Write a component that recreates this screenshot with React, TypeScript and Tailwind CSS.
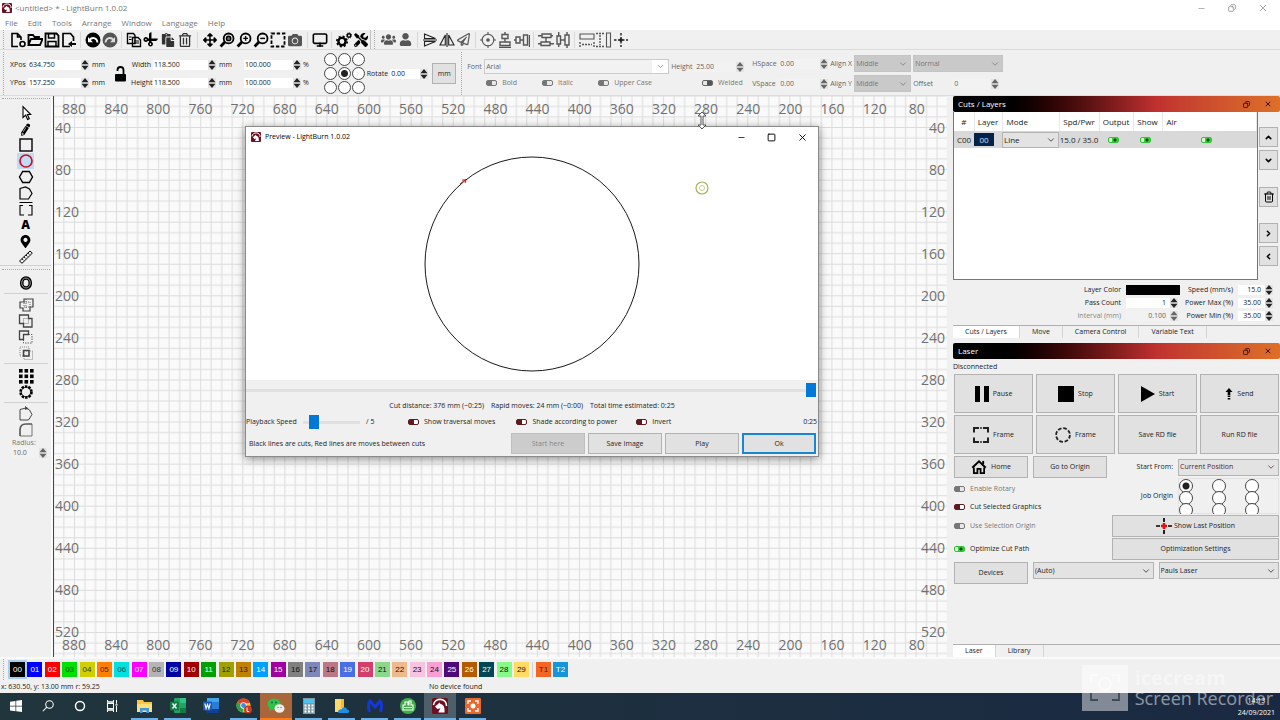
import { useState } from 'react';
import type { ReactNode } from 'react';
import clsx from 'clsx';
import { Save, FilePlus2, FileInput, Monitor, ChevronDown, X, Minus, Copy, Square, Trash2 } from 'lucide-react';
import {
    FaRegFolderOpen, FaRegCopy, FaCut, FaPaste, FaRegTrashAlt, FaArrowsAlt, FaCamera, FaCogs, FaTools,
    FaUsers, FaUser, FaRegPaperPlane, FaMapMarkerAlt, FaPencilAlt,
} from 'react-icons/fa';

const COLUMNS = Array.from({ length: 21 }, (_, i) => 880 - i * 40);
const ROWS = Array.from({ length: 13 }, (_, i) => 40 + i * 40);

const SWATCHES = [
    ['00', 'bg-black text-white'], ['01', 'bg-[#0000ff] text-white'], ['02', 'bg-[#ff0000] text-white'],
    ['03', 'bg-[#00e000] text-[#064a06]'], ['04', 'bg-[#d0d000] text-[#333300]'], ['05', 'bg-[#ff8000] text-[#4a2500]'],
    ['06', 'bg-[#00e0e0] text-[#064a4a]'], ['07', 'bg-[#ff00ff] text-white'], ['08', 'bg-[#b4b4b4] text-[#333]'],
    ['09', 'bg-[#0000a0] text-white'], ['10', 'bg-[#a00000] text-white'], ['11', 'bg-[#00a000] text-white'],
    ['12', 'bg-[#a0a000] text-[#222]'], ['13', 'bg-[#c08000] text-[#222]'], ['14', 'bg-[#00a0ff] text-white'],
    ['15', 'bg-[#a000a0] text-white'], ['16', 'bg-[#808080] text-[#111]'], ['17', 'bg-[#7d87b9] text-[#111]'],
    ['18', 'bg-[#bb7784] text-[#111]'], ['19', 'bg-[#4a6fe3] text-white'], ['20', 'bg-[#d33f6a] text-white'],
    ['21', 'bg-[#8cd78c] text-[#111]'], ['22', 'bg-[#f0b98d] text-[#111]'], ['23', 'bg-[#f6c4e1] text-[#111]'],
    ['24', 'bg-[#fa9ed4] text-[#111]'], ['25', 'bg-[#500a78] text-white'], ['26', 'bg-[#b45a00] text-white'],
    ['27', 'bg-[#004754] text-white'], ['28', 'bg-[#86fa88] text-[#111]'], ['29', 'bg-[#ffdb66] text-[#111]'],
];

type IconProps = { children: ReactNode; className?: string };

function Icon({ children, className = 'size-4' }: IconProps) {
    return (
        <svg viewBox="0 0 16 16" className={className} fill="none" stroke="currentColor" strokeWidth={1.4} aria-hidden="true">
            {children}
        </svg>
    );
}

function Tool({ label, children, className }: { label: string; children: ReactNode; className?: string }) {
    return (
        <button type="button" aria-label={label} className={clsx('flex h-4 w-[17px] shrink-0 items-center justify-center', className)}>
            {children}
        </button>
    );
}

function Sep() {
    return <div className="mx-[3px] h-4 w-px bg-[#d8d8d8]" />;
}

function Grip() {
    return <div className="h-full w-0 border-l border-dotted border-[#a8a8a8]" />;
}

function Spinner() {
    return (
        <svg viewBox="0 0 8 10" className="h-[10px] w-2 shrink-0" aria-hidden="true">
            <rect width="8" height="10" fill="#e4e4e4" />
            <path d="M4 0L7.500 4.200H.5zM4 10L7.500 5.800H.5z" fill="currentColor" />
        </svg>
    );
}

type NumProps = { label: string; value: string; className?: string; disabled?: boolean; right?: boolean };

function Num({ label, value, className, disabled, right }: NumProps) {
    return (
        <span className={clsx('flex items-center', disabled && 'text-[#666]', className)}>
            <input
                aria-label={label}
                defaultValue={value}
                disabled={disabled}
                className={clsx('h-[10px] w-0 min-w-0 flex-1 px-px outline-none', disabled ? 'bg-[#f2f2f2]' : 'bg-white', right && 'pr-1 text-right')}
            />
            <Spinner />
        </span>
    );
}

function Toggle({ label, on, disabled, hideLabel }: { label: string; on?: boolean; disabled?: boolean; hideLabel?: boolean }) {
    const [checked, setChecked] = useState(!!on);
    let look = 'border-[#5c1c20] bg-[linear-gradient(90deg,#5c1c20_55%,#fff_55%)]';
    if (disabled) look = 'border-[#777] bg-[linear-gradient(90deg,#777_50%,#e8e8e8_50%)]';
    if (disabled && on) look = 'border-[#666] bg-[linear-gradient(90deg,#e8e8e8_45%,#555_45%)]';
    if (!disabled && checked) look = 'border-[#2fc436] bg-[radial-gradient(circle_at_6px_2px,#0d4a10_1px,transparent_2px),linear-gradient(90deg,#d8f8d8_35%,#35cf3c_35%)]';
    return (
        <label className={clsx('flex items-center gap-[5px] whitespace-nowrap', disabled && 'text-[#777]')}>
            <input
                type="checkbox"
                aria-label={label}
                checked={checked}
                disabled={disabled}
                onChange={(e) => setChecked(e.target.checked)}
                className={clsx('h-[6px] w-[11px] shrink-0 appearance-none rounded-[2px] border', look)}
            />
            {!hideLabel && label}
        </label>
    );
}

function Combo({ label, value, className, disabled }: { label: string; value: string; className?: string; disabled?: boolean }) {
    return (
        <span className={clsx('relative flex border', disabled ? 'border-[#c4c4c4] bg-[#c9c9c9] text-[#777]' : 'border-[#b4b4b4] bg-[#e3e3e3]', className)}>
            <select aria-label={label} disabled={disabled} className="w-full appearance-none bg-transparent px-px outline-none">
                <option>{value}</option>
            </select>
            <ChevronDown size={10} strokeWidth={1.8} className="pointer-events-none absolute right-[2px] top-1/2 -translate-y-1/2" />
        </span>
    );
}

function PushButton({ children, className }: { children: ReactNode; className?: string }) {
    return (
        <button type="button" className={clsx('flex items-center justify-center border border-[#b2b2b2] bg-[#e1e1e1]', className)}>
            {children}
        </button>
    );
}

function OriginGrid({ name, picked, className, dot }: { name: string; picked: number; className: string; dot: string }) {
    const [value, setValue] = useState(picked);
    return (
        <div role="radiogroup" aria-label={name} className={clsx('grid grid-cols-3', className)}>
            {Array.from({ length: 9 }, (_, i) => (
                <input
                    key={i}
                    type="radio"
                    name={name}
                    aria-label={`${name} ${i + 1}`}
                    checked={value === i}
                    onChange={() => setValue(i)}
                    className={clsx('appearance-none rounded-full border border-[#444] bg-white checked:bg-[radial-gradient(circle,#222_3px,#fff_4px)]', dot)}
                />
            ))}
        </div>
    );
}

function Magnifier({ children, label }: { children?: ReactNode; label: string }) {
    return (
        <Tool label={label}>
            <Icon>
                <circle cx="9.6" cy="6.4" r="4.9" strokeWidth="1.8" />
                <path d="M6.2 9.8L1.6 14.4" strokeWidth="2.8" />
                {children}
            </Icon>
        </Tool>
    );
}

function AppLogo({ className }: { className: string }) {
    return (
        <svg viewBox="0 0 16 16" className={className} aria-hidden="true">
            <rect width="16" height="16" rx="1.5" fill="#6d1020" />
            <path d="M1.5 7C2 3 5.500 1.300 8.500 1.400c4 .2 6.300 3 6 6.600" fill="none" stroke="#fff" strokeWidth="1.600" />
            <path d="M3 8.500l3-2.500 1.500-1.600 1 1.500c3 .6 4.500 3.100 4 8.600H6.500c.2-2 1.300-2.800 2-4.200L5.500 11z" fill="#fff" />
        </svg>
    );
}

function TopToolbar() {
    return (
        <div className="flex h-5 items-center border-b border-[#dadada] pl-[3px] text-black">
            <Grip />
            <div className="w-[5px]" />
            <Tool label="New">
                <Icon><path d="M8 14.500H2v-13h5.500L11 5v3M7.500 1.500V5H11" strokeWidth="1.600" /><circle cx="12.500" cy="12" r="2.500" strokeWidth="1.600" /></Icon>
            </Tool>
            <Tool label="Open">
                <Icon><path d="M1.500 13V3h4.500l1.500 2H12v2M1.500 13L4 7h11.500L13 13z" strokeWidth="1.800" /></Icon>
            </Tool>
            <Tool label="Save">
                <Icon><path d="M1.500 1.500h11l2 2v11h-13z" strokeWidth="1.800" /><path d="M4.500 2v4h6V2M4 14.500V9.500h8v5" strokeWidth="1.500" /></Icon>
            </Tool>
            <Tool label="Import">
                <Icon><path d="M9 14.500H2v-13h7.500L12.500 5v4" strokeWidth="1.700" /><path d="M7 12l4-3v2h4v2h-4v2z" fill="currentColor" stroke="none" /></Icon>
            </Tool>
            <Sep />
            <Tool label="Undo">
                <Icon>
                    <circle cx="8" cy="8" r="7.500" fill="currentColor" stroke="none" />
                    <path d="M12.500 10.500C12 5.500 7 4.800 4.500 8" stroke="#fff" strokeWidth="1.800" />
                    <path d="M3 5v5.200h5z" fill="#fff" stroke="none" />
                </Icon>
            </Tool>
            <Tool label="Redo" className="text-[#555]">
                <Icon>
                    <circle cx="8" cy="8" r="7.500" fill="currentColor" stroke="none" />
                    <path d="M3.500 10.500C4 5.500 9 4.800 11.500 8" stroke="#ddd" strokeWidth="1.800" />
                    <path d="M13 5v5.200H8z" fill="#ddd" stroke="none" />
                </Icon>
            </Tool>
            <Sep />
            <Tool label="Copy">
                <Icon><path d="M1.500 1.500h6l1.500 2v8H1.500zM6.500 5.500h5.500l2.500 2.500v6.500h-8z" fill="#f0f0f0" strokeWidth="1.400" /><path d="M8 9h5M8 11h5M3 5h2.500M3 7.500h2.500" strokeWidth="1" /></Icon>
            </Tool>
            <Tool label="Cut"><FaCut size={13} className="-rotate-45" /></Tool>
            <Tool label="Paste" className="text-[#333]"><FaPaste size={14} /></Tool>
            <Tool label="Delete" className="text-[#333]"><FaRegTrashAlt size={14} /></Tool>
            <div className="w-px" />
            <Sep />
            <Tool label="Pan"><FaArrowsAlt size={14} /></Tool>
            <Magnifier label="Zoom to page"><circle cx="9.6" cy="6.4" r="2.200" fill="#666" /></Magnifier>
            <Magnifier label="Zoom in"><path d="M9.600 4v4.800M7.200 6.400H12" /></Magnifier>
            <Magnifier label="Zoom out"><path d="M7.200 6.400H12" /></Magnifier>
            <Tool label="Frame selection">
                <Icon><rect x="1.500" y="1.500" width="13" height="13" strokeWidth="1.800" strokeDasharray="3.400 1.800" /></Icon>
            </Tool>
            <Tool label="Camera" className="text-[#555]"><FaCamera size={14} /></Tool>
            <div className="w-px" />
            <Sep />
            <Tool label="Preview"><Monitor size={16} strokeWidth={2.400} /></Tool>
            <Sep />
            <Tool label="Settings">
                <Icon>
                    <circle cx="6" cy="9.500" r="3.600" strokeWidth="2.400" />
                    <circle cx="6" cy="9.500" r="5.200" strokeWidth="1.600" strokeDasharray="2 2.084" />
                    <circle cx="13" cy="3.500" r="1.700" strokeWidth="1.400" />
                    <circle cx="13" cy="3.500" r="2.700" strokeWidth="1" strokeDasharray="1 1.120" />
                </Icon>
            </Tool>
            <Tool label="Device settings"><FaTools size={14} /></Tool>
            <div className="ml-px mr-[3px] h-full w-px bg-[#c0c0c0]" />
            <Grip />
            <div className="flex items-center pl-[5px] text-[#555]">
                <Tool label="Group"><FaUsers size={15} /></Tool>
                <Tool label="Ungroup"><FaUser size={13} /></Tool>
                <Sep />
                <Tool label="Flip vertical" className="text-[#222]">
                    <Icon><path d="M2.500 2L13.500 6.500h-11zM2.500 14L13.500 9.500h-11zM1 8h14" strokeWidth="1.100" /></Icon>
                </Tool>
                <Tool label="Flip horizontal" className="text-[#222]">
                    <Icon><path d="M6.300 3v10H1zM9.700 3v10H15zM8 1v14" strokeWidth="1.100" /></Icon>
                </Tool>
                <Tool label="Mirror across line"><FaRegPaperPlane size={13} /></Tool>
                <Sep />
                <Tool label="Center">
                    <Icon>
                        <circle cx="8" cy="8" r="5.800" strokeWidth="1.100" />
                        <circle cx="8" cy="8" r="1.800" fill="currentColor" stroke="none" />
                        <path d="M8 0v3M8 13v3M0 8h3M13 8h3" strokeWidth="1.100" />
                    </Icon>
                </Tool>
                <Tool label="Align centers vertically">
                    <Icon><path d="M5 2.500h6v4H5zM3 10h10v3.500H3zM8 0v2.500M8 6.500V10M2 15.500h12" /></Icon>
                </Tool>
                <Tool label="Align centers horizontally">
                    <Icon><path d="M2 5h4v6H2zM9.500 3h4v10h-4zM0 8h2M6 8h3.500M15.500 3v12" /></Icon>
                </Tool>
                <Sep />
                <Tool label="Distribute vertically">
                    <Icon><path d="M4 2h9v3.500H4zM3 10h9v3.500H3zM0 3.700h4M13 3.700h2M0 11.700h3M12 11.700h4M8 5.500V10" /></Icon>
                </Tool>
                <Tool label="Distribute horizontally">
                    <Icon><path d="M2 4h3.500v8H2zM10 3h4v10h-4zM3.700 0v4M3.700 12v3M12 0v3M12 13v3M5.500 8H10" /></Icon>
                </Tool>
                <Sep />
                <Tool label="Match widths">
                    <Icon><path d="M1 2h14v5H1z" strokeWidth="1.100" /><path d="M1 10v5M15 10v5M3 12.500h10" strokeDasharray="2 1" /></Icon>
                </Tool>
                <Tool label="Match heights">
                    <Icon><path d="M10.500 1h4v14h-4z" strokeWidth="1.100" /><path d="M0 1.500h8M0 14.500h8M4 3v10" strokeDasharray="2 1" /></Icon>
                </Tool>
                <Tool label="Move to position" className="text-[#222]">
                    <Icon><path d="M8 1v14M1 8h14" strokeDasharray="2.500 1.500" /><circle cx="8" cy="8" r="1.800" fill="currentColor" stroke="none" /></Icon>
                </Tool>
            </div>
        </div>
    );
}

function PropertiesBar() {
    return (
        <div className="flex h-[46px] items-center border-b border-[#dcdcdc] pl-[3px] pt-[2px]">
            <Grip />
            <div className="ml-[6px] flex w-24 flex-col gap-2">
                {[['XPos', '634.750'], ['YPos', '157.250']].map(([name, value]) => (
                    <div key={name} className="flex items-center gap-[2px]">
                        <span className="w-4">{name}</span>
                        <Num label={name} value={value} className="w-[61px]" />
                        <span className="ml-px">mm</span>
                    </div>
                ))}
            </div>
            <button type="button" aria-label="Lock aspect ratio" className="ml-2 text-black">
                <svg viewBox="0 0 13 16" className="h-4 w-[13px]" aria-hidden="true">
                    <rect x="1" y="8" width="11" height="7.500" rx="1" fill="currentColor" />
                    <path d="M3.500 5V4a3 3 0 0 1 6 0v4.500" fill="none" stroke="currentColor" strokeWidth="1.800" />
                </svg>
            </button>
            <div className="ml-1 flex flex-col gap-2">
                {['Width', 'Height'].map((name) => (
                    <div key={name} className="flex items-center gap-[2px]">
                        <span className="w-5 whitespace-nowrap text-right">{name}</span>
                        <Num label={name} value="118.500" className="w-[63px]" />
                        <span className="w-6 pl-px">mm</span>
                        <Num label={`${name} percent`} value="100.000" className="w-[57px]" />
                        <span>%</span>
                    </div>
                ))}
            </div>
            <OriginGrid name="Anchor" picked={4} className="ml-[15px] gap-px" dot="size-[13px]" />
            <span className="ml-[2px]">Rotate</span>
            <Num label="Rotate" value="0.00" className="ml-[2px] w-[38px]" />
            <PushButton className="ml-1 h-[21px] w-6">mm</PushButton>
            <div className="ml-1 flex h-full items-center pl-px">
                <Grip />
            </div>
            <div className="ml-[5px] flex flex-col gap-1 text-[#666]">
                <div className="flex items-center">
                    <span className="w-[17px]">Font</span>
                    <span className="relative flex h-[15px] w-[185px] border border-[#ccc] bg-[#f2f2f2]">
                        <select aria-label="Font" disabled className="w-full appearance-none bg-transparent px-px">
                            <option>Arial</option>
                        </select>
                        <span className="pointer-events-none absolute inset-y-0 right-0 flex w-4 items-center justify-center bg-white">
                            <ChevronDown size={9} strokeWidth={1.800} />
                        </span>
                    </span>
                    <span className="ml-[2px] w-6">Height</span>
                    <Num label="Height" value="25.00" disabled className="w-[49px]" />
                </div>
                <div className="flex items-center gap-[25px] pl-[19px]">
                    <Toggle label="Bold" disabled />
                    <Toggle label="Italic" disabled />
                    <Toggle label="Upper Case" disabled />
                    <div className="w-0" />
                    <Toggle label="Welded" on disabled />
                </div>
            </div>
            <div className="ml-2 grid grid-cols-[76px_22px_57px_90px] items-center gap-x-[2px] gap-y-[3px] text-[#666]">
                <div className="flex items-center gap-[2px]">
                    <span className="w-[25px]">HSpace</span>
                    <Num label="HSpace" value="0.00" disabled className="flex-1" />
                </div>
                <span>Align X</span>
                <Combo label="Align X" value="Middle" disabled className="h-[17px]" />
                <Combo label="Style" value="Normal" disabled className="h-[17px]" />
                <div className="flex items-center gap-[2px]">
                    <span className="w-[25px]">VSpace</span>
                    <Num label="VSpace" value="0.00" disabled className="flex-1" />
                </div>
                <span>Align Y</span>
                <Combo label="Align Y" value="Middle" disabled className="h-[17px]" />
                <div className="flex items-center">
                    <span className="w-10">Offset</span>
                    <Num label="Offset" value="0" disabled className="w-[46px]" />
                </div>
            </div>
        </div>
    );
}

function SideRule() {
    return <div className="mb-[3px] mt-[2px] h-px w-11 shrink-0 bg-[#d0d0d0]" />;
}

function SideToolbar() {
    return (
        <div className="flex w-[53px] shrink-0 flex-col items-center border-r-2 border-[#fafafa] pt-[2px] text-black">
            <div className="mb-[6px] w-12 border-t border-dotted border-[#a8a8a8]" />
            <Tool label="Select"><Icon><path d="M5 1.500v11l2.700-2.300 1.900 4.300 1.700-.8-1.900-4.200h3.300z" strokeWidth="1.100" fill="#fff" /></Icon></Tool>
            <Tool label="Draw lines"><FaPencilAlt size={11} className="-rotate-12" /></Tool>
            <Tool label="Rectangle"><Icon><rect x="2" y="2" width="12" height="12" /></Icon></Tool>
            <Tool label="Ellipse" className="bg-[#bfdcf2] text-[#c8102e]"><Icon><circle cx="8" cy="8" r="6" strokeWidth="1.700" /></Icon></Tool>
            <Tool label="Polygon"><Icon><path d="M4.700 2.500h6.600L14.500 8l-3.200 5.500H4.700L1.500 8z" /></Icon></Tool>
            <Tool label="Edit nodes"><Icon><path d="M2 3.500L7.500 2l4 2L14 8.500 10.500 14H2z" strokeWidth="1.200" /></Icon></Tool>
            <Tool label="Edit tabs"><Icon><path d="M1.500 1.500h13M2 4v10h4M14 4v10h-4M2 4.500h3M14 4.500h-3" strokeWidth="1.100" /></Icon></Tool>
            <Tool label="Text"><span className="text-[12px] font-black leading-4">A</span></Tool>
            <Tool label="Position laser"><FaMapMarkerAlt size={13} /></Tool>
            <Tool label="Measure"><Icon><path d="M1.500 12L12 2l2.300 2.200L4 14.300zM4 9.800l1.300 1.400M6 7.900l1.300 1.400M8 6l1.300 1.400M10 4.100l1.300 1.400" strokeWidth="1" /></Icon></Tool>
            <div className="h-px w-full shrink-0 bg-[#d0d0d0]" />
            <div className="mb-[5px] mt-[3px] w-12 border-t border-dotted border-[#a8a8a8]" />
            <Tool label="Offset shapes">
                <Icon><ellipse cx="8" cy="8" rx="4.300" ry="5" strokeWidth="3.600" /><ellipse cx="8" cy="8" rx="4.300" ry="5" stroke="#999" strokeWidth="1" /></Icon>
            </Tool>
            <SideRule />
            <div className="flex flex-col text-[#444]">
                <Tool label="Weld"><Icon><path d="M2 5h4V2h9v8h-3v4H5v-3H2z" strokeWidth="1.200" /><path d="M6 5h6v5H6zM8 2v9" strokeWidth=".800" strokeDasharray="1 1" /></Icon></Tool>
                <Tool label="Union"><Icon><path d="M1.500 2h9v3.500H14V14H5.500v-3.500h-4z" strokeWidth="1.300" /><path d="M5.500 5.500h5v5h-5z" strokeWidth=".700" strokeDasharray="1 1" /></Icon></Tool>
                <Tool label="Subtract"><Icon><path d="M1.500 2h9v3.500h-5v5h-4z" strokeWidth="1.300" /><path d="M10.500 5.500H14V14H5.500v-3.500" strokeWidth=".800" strokeDasharray="1.500 1" /></Icon></Tool>
                <Tool label="Intersect"><Icon><path d="M2 2h9v9H2zM6 6h8.500v8.500H6z" strokeWidth=".600" strokeDasharray="1 1" /><path d="M5.500 5.500h5.500V11H5.500z" strokeWidth="1.500" /></Icon></Tool>
            </div>
            <SideRule />
            <Tool label="Grid array" className="mt-px">
                <Icon>
                    {[1, 6.500, 12].map((y) => [1, 6.500, 12].map((x) => (
                        <rect key={`${x}-${y}`} x={x} y={y} width="3.600" height="3.600" fill="currentColor" stroke="none" />
                    )))}
                </Icon>
            </Tool>
            <Tool label="Circular array"><Icon><circle cx="8" cy="8" r="5.500" strokeWidth="2.600" strokeDasharray="2.400 1.055" /><circle cx="8" cy="8" r="4.800" strokeWidth=".800" /></Icon></Tool>
            <SideRule />
            <Tool label="Start point" className="text-[#444]"><Icon><path d="M2 3.500L8 2l3.500 2L14 8.500 10.500 14H2z" strokeWidth="1" /><path d="M7 0l3.500 2.500L7 4z" fill="currentColor" stroke="none" /></Icon></Tool>
            <Tool label="Radius" className="text-[#555]"><Icon><path d="M2 14V8c0-4 2-6 6-6h6" strokeWidth="1.600" /><path d="M2 14h12V2" strokeWidth=".800" /></Icon></Tool>
            <div className="flex w-full flex-col pl-3 text-[#777]">
                <span>Radius:</span>
                <Num label="Radius" value="10.0" disabled className="w-[35px]" />
            </div>
        </div>
    );
}

function Workspace() {
    return (
        <div className="relative flex min-w-0 flex-1 flex-col overflow-hidden border-l border-[#444] bg-[#fafafa] pb-[7px] pt-2 text-[14px] leading-[10px] text-[#707070]">
            <svg className="absolute inset-0 h-full w-full" aria-hidden="true">
                <defs>
                    <pattern id="cells" x="20" y="31" width="42.080" height="42.080" patternUnits="userSpaceOnUse">
                        <path d="M.5 0V42.080M10.900 0V42.080M21.500 0V42.080M32 0V42.080M0 .5H42.080M0 10.900H42.080M0 21.500H42.080M0 32H42.080" stroke="#dcdcdc" strokeWidth="1" />
                    </pattern>
                </defs>
                <rect width="100%" height="100%" fill="url(#cells)" />
            </svg>
            <div className="relative flex justify-between pr-[10px]">
                {COLUMNS.map((n) => <span key={n} className="w-10 text-center">{n}</span>)}
            </div>
            <div className="relative mb-[3px] mt-[9px] flex flex-1 justify-between pl-px pr-[2px]">
                <div className="flex flex-col justify-between">
                    {ROWS.map((n) => <span key={n}>{n}</span>)}
                </div>
                <div className="flex flex-col justify-between text-right">
                    {ROWS.map((n) => <span key={n}>{n}</span>)}
                </div>
            </div>
            <div className="relative flex justify-between pr-[10px]">
                {COLUMNS.map((n) => <span key={n} className="w-10 text-center">{n}</span>)}
            </div>
        </div>
    );
}

function DockTitle({ title }: { title: string }) {
    return (
        <div className="flex h-4 shrink-0 items-center rounded-[2px] bg-linear-to-r from-black from-12% via-[#c03030] via-62% to-[#dd7028] pl-[5px] pr-2 text-[8px] text-white">
            <h2 className="flex-1">{title}</h2>
            <button type="button" aria-label={`Float ${title}`} className="mr-[14px] text-[#3a1010]"><Copy size={7} strokeWidth={3} className="-scale-x-100" /></button>
            <button type="button" aria-label={`Close ${title}`} className="text-[#3a1010]"><X size={8} strokeWidth={3} /></button>
        </div>
    );
}

function CutsPanel() {
    return (
        <>
            <DockTitle title="Cuts / Layers" />
            <div className="flex h-[168px] gap-px">
                <div className="flex-1 border border-t-0 border-[#777] bg-white">
                    <table className="w-full table-fixed text-[8px]">
                        <thead>
                            <tr className="h-[19px] text-center *:border-r *:border-[#e8e8e8] *:font-normal">
                                <th className="w-5">#</th>
                                <th className="w-7">Layer</th>
                                <th className="w-[57px] pl-1 text-left">Mode</th>
                                <th className="w-10">Spd/Pwr</th>
                                <th className="w-[34px]">Output</th>
                                <th className="w-[29px]">Show</th>
                                <th className="pl-1 text-left">Air</th>
                            </tr>
                        </thead>
                        <tbody>
                            <tr className="h-[17px] bg-[#d9d9d9] text-center *:p-0">
                                <td>C00</td>
                                <td><span className="mr-auto block h-[13px] w-5 bg-[#05234a] leading-[13px] text-[#cfe0f5]">00</span></td>
                                <td><Combo label="Mode" value="Line" className="h-4" /></td>
                                <td className="whitespace-nowrap">15.0 / 35.0</td>
                                <td><span className="mr-[5px] inline-flex"><Toggle label="Output" on hideLabel /></span></td>
                                <td><span className="mr-[5px] inline-flex"><Toggle label="Show" on hideLabel /></span></td>
                                <td><span className="mr-[5px] inline-flex"><Toggle label="Air" on hideLabel /></span></td>
                            </tr>
                        </tbody>
                    </table>
                </div>
                <div className="flex w-[21px] flex-col gap-[3px] pr-[2px] pt-[15px] text-black *:h-5">
                    <PushButton><ChevronDown size={9} strokeWidth={4} className="rotate-180" /></PushButton>
                    <PushButton><ChevronDown size={9} strokeWidth={4} /></PushButton>
                    <PushButton className="mb-[13px] mt-[14px]"><Trash2 size={12} /></PushButton>
                    <PushButton><ChevronDown size={9} strokeWidth={4} className="-rotate-90" /></PushButton>
                    <PushButton><ChevronDown size={9} strokeWidth={4} className="rotate-90" /></PushButton>
                </div>
            </div>
            <div className="mt-[5px] grid grid-cols-[168px_54px_48px_35px] items-center gap-x-[5px] gap-y-[3px] text-right">
                <span>Layer Color</span>
                <button type="button" aria-label="Layer Color" className="h-[10px] bg-black" />
                <span className="whitespace-nowrap">Speed (mm/s)</span>
                <Num label="Speed (mm/s)" value="15.0" right />
                <span>Pass Count</span>
                <Num label="Pass Count" value="1" right className="mr-[2px]" />
                <span className="whitespace-nowrap">Power Max (%)</span>
                <Num label="Power Max (%)" value="35.00" right />
                <span className="text-[#888]">Interval (mm)</span>
                <Num label="Interval (mm)" value="0.100" right disabled className="mr-[2px]" />
                <span className="whitespace-nowrap">Power Min (%)</span>
                <Num label="Power Min (%)" value="35.00" right />
            </div>
            <Tabs items={['Cuts / Layers', 'Move', 'Camera Control', 'Variable Text']} className="mt-1" />
        </>
    );
}

function Tabs({ items, className }: { items: string[]; className?: string }) {
    const [active, setActive] = useState(items[0]);
    return (
        <div role="tablist" className={clsx('flex border-t border-[#b0b0b0]', className)}>
            {items.map((item) => (
                <button
                    key={item}
                    type="button"
                    role="tab"
                    aria-selected={active === item}
                    onClick={() => setActive(item)}
                    className={clsx('h-3 border-r border-[#d5d5d5] px-3 leading-3', active === item && 'bg-white')}
                >
                    {item}
                </button>
            ))}
        </div>
    );
}

function LaserPanel() {
    return (
        <>
            <DockTitle title="Laser" />
            <div className="mt-px h-[14px] leading-[14px]">Disconnected</div>
            <div className="grid grid-cols-4 gap-x-[3px] gap-y-[2px] pl-px pr-px *:h-[39px] *:gap-1">
                <PushButton><svg viewBox="0 0 14 16" className="h-4 w-[14px]" aria-hidden="true"><path d="M0 0h5v16H0zM9 0h5v16H9z" /></svg>Pause</PushButton>
                <PushButton><svg viewBox="0 0 16 16" className="size-4" aria-hidden="true"><path d="M0 0h16v16H0z" /></svg>Stop</PushButton>
                <PushButton><svg viewBox="0 0 14 16" className="h-4 w-[14px]" aria-hidden="true"><path d="M0 0l14 8L0 16z" /></svg>Start</PushButton>
                <PushButton><svg viewBox="0 0 8 12" className="h-3 w-2" aria-hidden="true"><path d="M4 0l3.500 4H5.300v3H2.700V4H.5zM2.700 7.600h2.600v1.400H2.700zM2.700 10h2.600v1.500H2.700z" /></svg>Send</PushButton>
                <PushButton><Icon><path d="M1 5.500V1h5M10 1h5v4.500M15 10.500V15h-5M6 15H1v-4.500" strokeWidth="2" /><path d="M7.300 1h1.400M7.300 15h1.400" strokeWidth="2" /></Icon>Frame</PushButton>
                <PushButton><Icon><circle cx="8" cy="8" r="6.900" strokeWidth="1.800" strokeDasharray="3.700 1.719" /></Icon>Frame</PushButton>
                <PushButton>Save RD file</PushButton>
                <PushButton>Run RD file</PushButton>
            </div>
            <div className="mt-[2px] flex items-center px-px">
                <PushButton className="h-[22px] w-[74px] gap-1">
                    <svg viewBox="0 0 16 15" className="h-[14px] w-4" aria-hidden="true">
                        <path d="M2.500 8v6h3.800V9.500h3.400V14h3.800V8" fill="none" stroke="#000" strokeWidth="1.900" />
                        <path d="M.8 8.300L8 1.500l7.200 6.800" fill="none" stroke="#000" strokeWidth="2.100" />
                        <path d="M11.500 1h2v3.500h-2z" />
                    </svg>
                    Home
                </PushButton>
                <PushButton className="ml-[5px] h-[22px] w-[74px]">Go to Origin</PushButton>
                <span className="flex-1 pr-[5px] text-right">Start From:</span>
                <Combo label="Start From" value="Current Position" className="h-[17px] w-[101px] text-[#5c1c20]" />
            </div>
            <div className="flex justify-between pr-px">
                <div className="flex flex-col pl-px pt-[6px]">
                    <Toggle label="Enable Rotary" disabled />
                    <div className="mt-2"><Toggle label="Cut Selected Graphics" /></div>
                    <div className="mt-[9px]"><Toggle label="Use Selection Origin" disabled /></div>
                    <div className="mt-[13px]"><Toggle label="Optimize Cut Path" on /></div>
                </div>
                <div className="w-[167px]">
                    <div className="flex h-9 items-center justify-end overflow-hidden">
                        <span className="mr-[5px]">Job Origin</span>
                        <OriginGrid name="Job Origin" picked={0} className="h-9 w-[101px] auto-rows-[12px] border border-[#e2e2e2]" dot="size-[14px]" />
                    </div>
                    <PushButton className="mt-px h-[22px] w-full gap-[2px]">
                        <Icon>
                            <path d="M8 0v4M8 12v4M0 8h4M12 8h4" stroke="#000" strokeWidth="1.700" />
                            <path d="M8 5v6M5 8h6" stroke="#e01010" strokeWidth="2.600" />
                        </Icon>
                        Show Last Position
                    </PushButton>
                    <PushButton className="mt-px h-[22px] w-full">Optimization Settings</PushButton>
                </div>
            </div>
            <div className="mt-[2px] flex gap-[5px] px-px">
                <PushButton className="h-[22px] w-[74px]">Devices</PushButton>
                <Combo label="Port" value="(Auto)" className="h-[17px] flex-1" />
                <Combo label="Laser device" value="Pauls Laser" className="h-[17px] flex-1" />
            </div>
            <Tabs items={['Laser', 'Library']} className="mt-auto" />
        </>
    );
}

function PreviewDialog() {
    const slider = 'appearance-none bg-transparent [&::-webkit-slider-runnable-track]:h-[3px] [&::-webkit-slider-runnable-track]:bg-[#e0e0e0] [&::-webkit-slider-thumb]:-mt-[6px] [&::-webkit-slider-thumb]:h-[14px] [&::-webkit-slider-thumb]:w-[10px] [&::-webkit-slider-thumb]:appearance-none [&::-webkit-slider-thumb]:bg-[#0078d7]';
    return (
        <div role="dialog" aria-label="Preview" className="absolute left-[245px] top-[126px] w-[574px] border border-[#8a8a8a] bg-[#f0f0f0] shadow-[0_2px_9px_rgba(0,0,0,0.45)]">
            <div className="flex h-5 items-center bg-white pl-[5px] pr-[10px] text-black">
                <AppLogo className="mr-1 size-[10px]" />
                <span className="flex-1">Preview - LightBurn 1.0.02</span>
                <button type="button" aria-label="Minimize"><Minus size={9} strokeWidth={2} /></button>
                <button type="button" aria-label="Maximize" className="ml-[21px]"><Square size={9} strokeWidth={2.500} /></button>
                <button type="button" aria-label="Close" className="ml-[21px]"><X size={11} strokeWidth={2} /></button>
            </div>
            <svg viewBox="0 0 572 233" className="block w-full bg-white" aria-hidden="true">
                <circle cx="286" cy="117" r="107" fill="none" stroke="#1a1a1a" />
                <path d="M214 37l6-5M216 33l4 0-1 3" fill="none" stroke="#d02020" />
            </svg>
            <input type="range" aria-label="Preview position" defaultValue={100} className={clsx('mt-[2px] block h-4 w-full pr-[2px]', slider)} />
            <div className="mt-[3px] flex h-[10px] justify-center gap-[7px]">
                <span>Cut distance: 376 mm (~0:25)</span>
                <span>Rapid moves: 24 mm (~0:00)</span>
                <span>Total time estimated: 0:25</span>
            </div>
            <div className="flex h-[22px] items-center pr-px">
                <label htmlFor="speed" className="w-[57px]">Playback Speed</label>
                <input id="speed" type="range" defaultValue={12} className={clsx('h-4 w-[57px]', slider)} />
                <span className="ml-[6px] w-[42px]">/ 5</span>
                <Toggle label="Show traversal moves" />
                <div className="w-[21px]" />
                <Toggle label="Shade according to power" />
                <div className="w-[19px]" />
                <Toggle label="Invert" />
                <span className="flex-1 text-right">0:25</span>
            </div>
            <div className="flex items-center gap-[3px] pb-[2px] pl-[3px] pr-[2px]">
                <span className="flex-1">Black lines are cuts, Red lines are moves between cuts</span>
                <button type="button" disabled className="h-[21px] w-[74px] border border-[#bfbfbf] bg-[#cccccc] text-[#888]">Start here</button>
                <PushButton className="h-[21px] w-[74px]">Save Image</PushButton>
                <PushButton className="h-[21px] w-[74px]">Play</PushButton>
                <button type="button" className="h-[21px] w-[74px] border-2 border-[#1a86d0] bg-[#e1e1e1]">Ok</button>
            </div>
        </div>
    );
}

function TaskItem({ label, children, open, className = 'w-[33px]' }: { label: string; children: ReactNode; open?: boolean; className?: string }) {
    return (
        <button type="button" aria-label={label} className={clsx('flex items-center justify-center px-[3px]', className)}>
            <span className={clsx('flex h-full w-full items-center justify-center border-b-2', open ? 'border-[#6cb0e8]' : 'border-transparent')}>
                {children}
            </span>
        </button>
    );
}

function Taskbar() {
    return (
        <div className="flex h-[27px] items-stretch bg-linear-to-r from-[#20353c] to-[#1a2942] text-white">
            <TaskItem label="Start" className="w-8"><svg viewBox="0 0 12 12" className="size-3" fill="#fff"><path d="M0 1.700l5.500-.8v4.800H0zM6.200.8L12 0v5.700H6.200zM0 6.400h5.500v4.800L0 10.400zM6.200 6.400H12V12l-5.800-.8z" /></svg></TaskItem>
            <TaskItem label="Search" className="w-8"><Icon className="size-3"><circle cx="10" cy="6" r="5" /><path d="M6.500 9.500L1 15" /></Icon></TaskItem>
            <TaskItem label="Cortana" className="w-8"><Icon className="size-3"><circle cx="8" cy="8" r="6" strokeWidth="2" /></Icon></TaskItem>
            <TaskItem label="Task view" className="w-8"><Icon className="size-3"><path d="M2 4.500h8v7H2zM2 0v2.500h8V0M2 16v-2.500h8V16M14 0v5M14 8v8M12.500 6.500h3" /></Icon></TaskItem>
            <TaskItem label="File Explorer" open>
                <svg viewBox="0 0 16 16" className="size-4"><path d="M0 2h6l1 2h8v10H0z" fill="#f5c648" /><path d="M0 6h15v8H0z" fill="#ffdd77" /><path d="M3 15V10h9v5h-2.500v-2.500h-4V15z" fill="#3f96dc" /></svg>
            </TaskItem>
            <TaskItem label="Excel" open>
                <svg viewBox="0 0 16 16" className="size-4"><rect x="4" width="12" height="15" rx="1" fill="#21a366" /><path d="M10 0h6v5h-6z" fill="#33c481" /><path d="M10 10h6v5h-6z" fill="#107c41" /><rect y="3.500" width="9" height="9" rx="1" fill="#107c41" /><path d="M2.500 5.500l4 5M6.500 5.500l-4 5" stroke="#fff" strokeWidth="1.300" /></svg>
            </TaskItem>
            <TaskItem label="Word">
                <svg viewBox="0 0 16 16" className="size-4"><rect x="4" width="12" height="15" rx="1" fill="#2b7cd3" /><path d="M4 0h12v4H4z" fill="#41a5ee" /><path d="M4 11h12v4H4z" fill="#103f91" /><rect y="3.500" width="9" height="9" rx="1" fill="#185abd" /><path d="M1.800 5.500l1.300 5 1.400-4 1.400 4 1.300-5" fill="none" stroke="#fff" strokeWidth="1.100" /></svg>
            </TaskItem>
            <TaskItem label="Chrome" open>
                <svg viewBox="0 0 16 16" className="size-4"><circle cx="7.500" cy="7.500" r="7" fill="#fbc116" /><path d="M7.500 7.500L1.400 4A7 7 0 0 1 14 5H7.500z" fill="#e33b2e" /><path d="M7.500 7.500L1.400 4a7 7 0 0 0 5.500 10.500z" fill="#2ba24c" /><circle cx="7.500" cy="7.500" r="3.200" fill="#fff" /><circle cx="7.500" cy="7.500" r="2.400" fill="#4285f4" /><circle cx="12" cy="11.500" r="4" fill="#c53a1c" /><path d="M11 9.500v4h2.200" fill="none" stroke="#fff" strokeWidth=".900" /></svg>
            </TaskItem>
            <button type="button" aria-label="WeChat" className="flex w-8 items-center justify-center border-b-2 border-[#ff7a1a] bg-[#a9663a]">
                <svg viewBox="0 0 18 16" className="h-4 w-[18px]"><ellipse cx="7" cy="6" rx="6.500" ry="5.500" fill="#2fc14b" /><path d="M2 13l1-4 3 2z" fill="#2fc14b" /><circle cx="5" cy="4.500" r=".9" fill="#164" /><circle cx="9" cy="4.500" r=".9" fill="#164" /><ellipse cx="12.500" cy="10.500" rx="5" ry="4.300" fill="#eee" /><circle cx="11" cy="9.500" r=".7" fill="#777" /><circle cx="14" cy="9.500" r=".7" fill="#777" /></svg>
            </button>
            <TaskItem label="Calculator" open>
                <svg viewBox="0 0 16 16" className="size-4"><rect x="2" width="12" height="16" fill="#7f98a8" /><rect x="3" y="1" width="10" height="4" fill="#49c4ea" />{[6.500, 9.500, 12.500].map((y) => <path key={y} d={`M3.500 ${y}h2v2h-2zM7 ${y}h2v2H7zM10.500 ${y}h2v2h-2z`} fill="#fff" />)}</svg>
            </TaskItem>
            <TaskItem label="OneDrive" open>
                <svg viewBox="0 0 16 16" className="size-4"><path d="M1 1h8v13H1z" fill="#ffd968" /><path d="M7 1h3v9H7z" fill="#f3bb3a" /><path d="M4 14.500c0-3 2.500-3.500 3.500-3 1-3 5-3 5.500 0 2.500 0 3 3.500.5 3.500H5z" fill="#1f8fe5" /></svg>
            </TaskItem>
            <TaskItem label="Malwarebytes" open>
                <svg viewBox="0 0 16 16" className="size-4"><path d="M2.500 14C1 10 1.500 4 3 3l5 6 5-6c1.500 1 2 7 .5 11" fill="none" stroke="#1437d8" strokeWidth="3" /></svg>
            </TaskItem>
            <TaskItem label="Green app" open>
                <svg viewBox="0 0 16 16" className="size-4"><circle cx="8" cy="8" r="8" fill="#3fae49" /><path d="M3 12V7h2V4h3v3h1V3h2v4h2v5z" fill="none" stroke="#fff" strokeWidth="1.100" /><path d="M4 9.500h8" stroke="#fff" /></svg>
            </TaskItem>
            <button type="button" aria-label="LightBurn" className="flex w-8 items-center justify-center border-b-2 border-[#6cb0e8] bg-[#4d5f68]"><AppLogo className="size-4" /></button>
            <TaskItem label="Recorder" open>
                <svg viewBox="0 0 16 16" className="size-4"><rect width="16" height="16" rx="1" fill="#e8692d" /><path d="M3 6V3h3M10 3h3v3M13 10v3h-3M6 13H3v-3" fill="none" stroke="#fff" strokeWidth="1.300" /><circle cx="8" cy="8" r="2.500" fill="#fff" /></svg>
            </TaskItem>
            <div className="ml-auto mr-[5px] flex flex-col justify-center text-center leading-[12px]">
                <span>14:13</span>
                <span>24/09/2021</span>
            </div>
        </div>
    );
}

export default function App() {
    return (
        <div className="relative flex min-h-screen flex-col overflow-hidden bg-[#f0f0f0] font-['Open_Sans','Noto_Sans',sans-serif] text-[7px] leading-[10px] text-[#222]">
            <header className="bg-white text-[8px] text-[#777]">
                <div className="flex h-4 items-center pl-[2px] pr-3">
                    <AppLogo className="mr-[3px] size-[10px]" />
                    <h1 className="flex-1">&lt;untitled&gt; * - LightBurn 1.0.02</h1>
                    <button type="button" aria-label="Minimize"><Minus size={9} strokeWidth={1.500} /></button>
                    <button type="button" aria-label="Restore" className="ml-[22px]"><Copy size={8} strokeWidth={2} className="-scale-x-100" /></button>
                    <button type="button" aria-label="Close" className="ml-[22px]"><X size={10} strokeWidth={1.500} /></button>
                </div>
                <nav className="flex h-[14px] items-center gap-[10px] pl-[5px]">
                    {['File', 'Edit', 'Tools', 'Arrange', 'Window', 'Language', 'Help'].map((item) => (
                        <button key={item} type="button">{item}</button>
                    ))}
                </nav>
            </header>
            <TopToolbar />
            <PropertiesBar />
            <main className="flex flex-1">
                <SideToolbar />
                <Workspace />
                <aside className="ml-[6px] flex w-[327px] shrink-0 flex-col">
                    <CutsPanel />
                    <div className="h-[5px]" />
                    <LaserPanel />
                </aside>
            </main>
            <div className="flex h-[23px] items-center border-t-2 border-[#fafafa] pl-[3px] font-['Liberation_Sans',sans-serif] text-[8px]">
                <Grip />
                <div className="ml-[6px] flex w-[519px] justify-between">
                    {SWATCHES.map(([name, color], i) => (
                        <button key={name} type="button" className={clsx('h-[15px] w-[15px] text-center', color, i === 0 && 'outline-2 outline-[#a8d0ee]')}>{name}</button>
                    ))}
                </div>
                <div className="mx-[3px] h-4 w-px bg-[#d0d0d0]" />
                <button type="button" className="mr-[2px] h-[15px] w-[15px] bg-[#f26522] text-[#5a1d00]">T1</button>
                <button type="button" className="h-[15px] w-[15px] bg-[#1695dc] text-white">T2</button>
            </div>
            <div className="flex h-[13px] items-center pl-px">
                <span className="w-[428px]">x: 630.50, y: 13.00 mm r: 59.25</span>
                <span>No device found</span>
            </div>
            <Taskbar />
            <PreviewDialog />

            {/* pointer and click ring */}
            <svg viewBox="0 0 10 18" className="pointer-events-none absolute left-[697px] top-[112px] h-[18px] w-[10px]" aria-hidden="true">
                <path d="M5 0l4 4H6v9h3l-4 4-4-4h3V4H1z" fill="#fff" stroke="#444" strokeWidth=".900" />
            </svg>
            <svg viewBox="0 0 14 14" className="pointer-events-none absolute left-[695px] top-[181px] size-[14px]" fill="none" stroke="#a3b356" aria-hidden="true">
                <circle cx="7" cy="7" r="6" strokeWidth="1.200" />
                <circle cx="7" cy="7" r="2.500" stroke="#c5d090" />
            </svg>

            {/* recorder watermark */}
            <div className="pointer-events-none absolute bottom-[9px] right-[7px] flex items-center gap-[7px] text-white">
                <svg viewBox="0 0 46 46" className="size-[46px]" aria-hidden="true">
                    <rect width="46" height="46" fill="#fff" fillOpacity=".45" />
                    <path d="M9 17v-7h7M30 10h7v7" fill="none" stroke="#fff" strokeOpacity=".500" strokeWidth="2" />
                    <path d="M37 28v7h-7M16 35H9v-7" fill="none" stroke="#1e3040" strokeOpacity=".700" strokeWidth="1.800" />
                    <circle cx="23" cy="19" r="6" fill="none" stroke="#fff" strokeOpacity=".500" strokeWidth="2" />
                </svg>
                <div className="flex flex-col text-[18px] leading-[20px]">
                    <span className="text-[20px] font-bold opacity-40">icecream</span>
                    <span className="opacity-50">Screen Recorder</span>
                </div>
            </div>
        </div>
    );
}
